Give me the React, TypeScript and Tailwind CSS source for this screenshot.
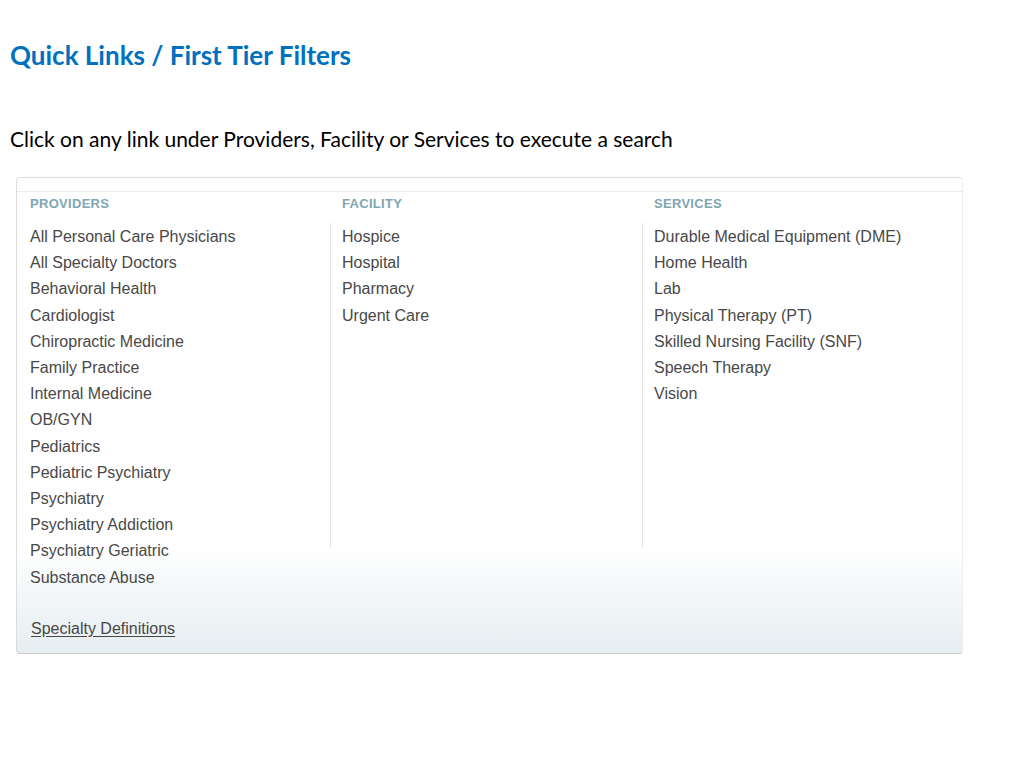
const providers = [
  "All Personal Care Physicians",
  "All Specialty Doctors",
  "Behavioral Health",
  "Cardiologist",
  "Chiropractic Medicine",
  "Family Practice",
  "Internal Medicine",
  "OB/GYN",
  "Pediatrics",
  "Pediatric Psychiatry",
  "Psychiatry",
  "Psychiatry Addiction",
  "Psychiatry Geriatric",
  "Substance Abuse",
];

const facility = ["Hospice", "Hospital", "Pharmacy", "Urgent Care"];

const services = [
  "Durable Medical Equipment (DME)",
  "Home Health",
  "Lab",
  "Physical Therapy (PT)",
  "Skilled Nursing Facility (SNF)",
  "Speech Therapy",
  "Vision",
];

function LinkList({ items }: { items: string[] }) {
  return (
    <ul>
      {items.map((item) => (
        <li key={item} className="leading-[26.2px] cursor-pointer hover:underline">
          {item}
        </li>
      ))}
    </ul>
  );
}

export default function App() {
  return (
    <div className="min-h-screen bg-white pl-[10px]">
      {/* Page title */}
      <h1
        className="pt-[39px] text-[26px] leading-[32px] font-bold text-[#0070c0]"
        style={{ fontFamily: "Lato, 'Open Sans', sans-serif" }}
      >
        Quick Links / First Tier Filters
      </h1>
      <p
        className="mt-[55px] text-[21px] leading-[26px] text-black"
        style={{ fontFamily: "Lato, 'Open Sans', sans-serif" }}
      >
        Click on any link under Providers, Facility or Services to execute a search
      </p>

      {/* Quick links panel */}
      <div
        className="mt-[25px] ml-[6px] w-[947px] h-[477px] rounded-[4px] border border-[#dcdcdc] border-b-[#c4c8ca] border-r-[#eeeeee] bg-[linear-gradient(to_bottom,#ffffff_0px,#ffffff_372px,#f9fbfc_390px,#e6eef1_100%)] flex flex-col"
        style={{ fontFamily: "'Liberation Sans', Arial, sans-serif" }}
      >
        <div className="h-[14px] border-b border-[#ececec] shrink-0" />

        <div className="flex text-[16px] text-[#484848]">
          <div className="w-[313px] pl-[13px]">
            <h2 className="pt-[4px] h-[32px] text-[13px] leading-[16px] font-bold text-[#7fa6b3] tracking-[0.3px]">
              PROVIDERS
            </h2>
            <LinkList items={providers} />
          </div>
          <div className="w-[312px]">
            <h2 className="pt-[4px] pl-[12px] h-[31px] text-[13px] leading-[16px] font-bold text-[#7fa6b3] tracking-[0.3px]">
              FACILITY
            </h2>
            <div className="h-[324px] pt-[1px] border-l border-[#dfe3e6] pl-[11px]">
              <LinkList items={facility} />
            </div>
          </div>
          <div className="flex-1">
            <h2 className="pt-[4px] pl-[12px] h-[31px] text-[13px] leading-[16px] font-bold text-[#7fa6b3] tracking-[0.3px]">
              SERVICES
            </h2>
            <div className="h-[324px] pt-[1px] border-l border-[#dfe3e6] pl-[11px]">
              <LinkList items={services} />
            </div>
          </div>
        </div>

        <div className="pl-[14px] mt-[25px]">
          <a className="text-[16px] leading-[26px] text-[#484848] underline underline-offset-2 cursor-pointer">
            Specialty Definitions
          </a>
        </div>
      </div>
    </div>
  );
}
